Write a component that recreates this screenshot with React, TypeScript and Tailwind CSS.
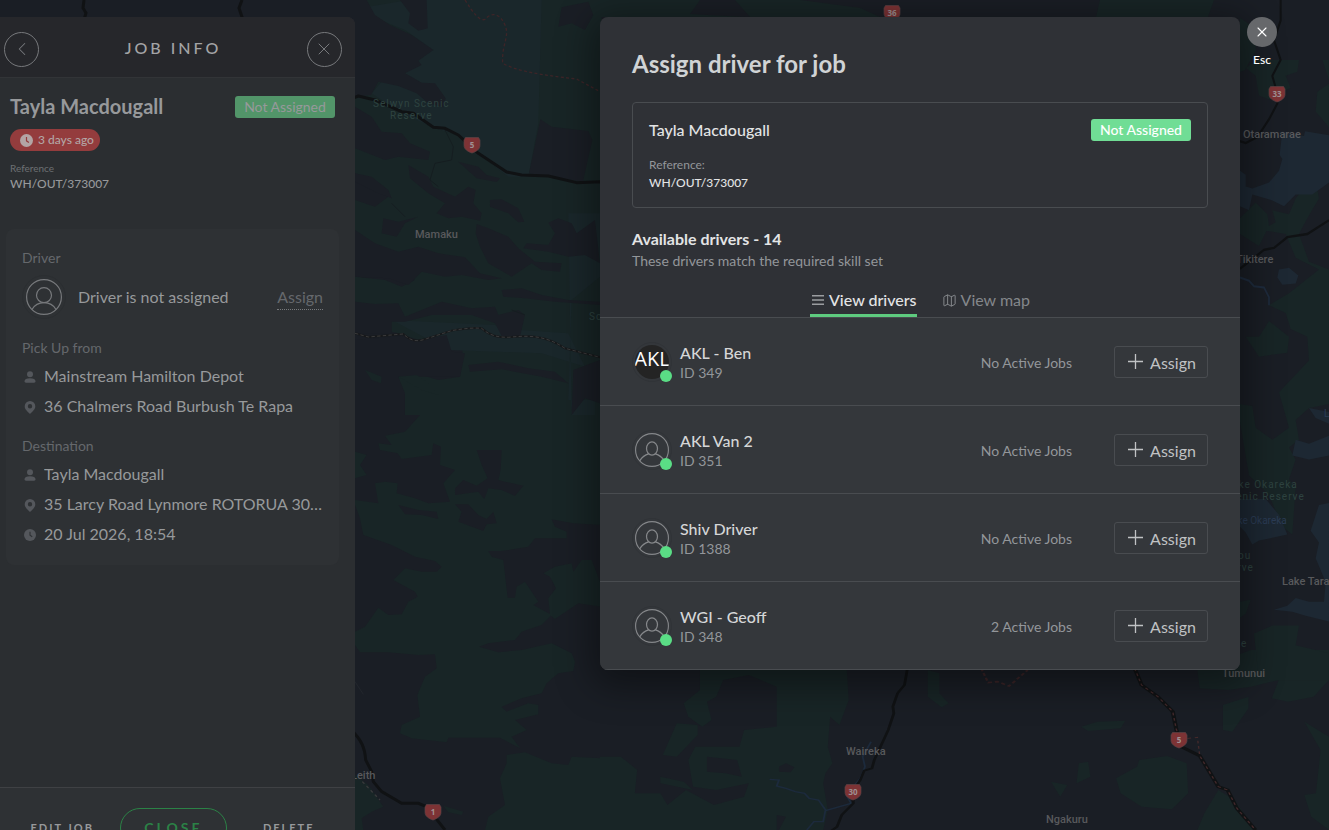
import { useState } from "react";
import { ChevronLeft, Map as MapIcon, X } from "lucide-react";

/* ── Data ───────────────────────────────────────────────────────────── */
interface Driver {
  id: number;
  name: string;
  jobs: string;
  logo?: string;
}

const DRIVERS: Driver[] = [
  { id: 349, name: "AKL - Ben", jobs: "No Active Jobs", logo: "AKL" },
  { id: 351, name: "AKL Van 2", jobs: "No Active Jobs" },
  { id: 1388, name: "Shiv Driver", jobs: "No Active Jobs" },
  { id: 348, name: "WGI - Geoff", jobs: "2 Active Jobs" },
];

const SHIELDS = [
  { x: 892, y: 13, label: "36" },
  { x: 472, y: 145, label: "5" },
  { x: 1277, y: 94, label: "33" },
  { x: 1179, y: 740, label: "5" },
  { x: 853, y: 792, label: "30" },
  { x: 433, y: 812, label: "1" },
];

const TOWNS = [
  { x: 415, y: 238, name: "Mamaku" },
  { x: 1243, y: 138, name: "Otaramarae" },
  { x: 1236, y: 263, name: "Tikitere" },
  { x: 1282, y: 585, name: "Lake Tarawera" },
  { x: 1222, y: 677, name: "Tumunui" },
  { x: 846, y: 755, name: "Waireka" },
  { x: 1046, y: 823, name: "Ngakuru" },
  { x: 351, y: 779, name: "Leith" },
];

/* ── Map ────────────────────────────────────────────────────────────── */
function MapBackdrop() {
  return (
    <svg
      viewBox="0 0 1329 830"
      preserveAspectRatio="xMinYMin slice"
      className="absolute inset-0 h-full w-full bg-[#1a1e25]"
      aria-hidden="true"
    >
      {/* north west forest */}
      <g transform="translate(355 0) scale(.3333)">
        <path
          fill="#182526"
          d="M0 0H740V1245H150L145 1190 128 1130 200 1125 250 1140 315 1130 325 1030 285 1030 270 1000 190 1020 130 1000 60 985 0 1000V830L90 840 140 860 180 840 160 820 0 790V600L60 620 100 590 0 520Z"
        />
        <path
          fill="#1a272b"
          d="M40 20 160 0H560L550 370 520 530H460L370 460 320 410 230 380 140 340 50 280 80 245 200 250 270 290 150 220 195 175 235 150 150 90 50 50ZM110 960 420 975 500 990 640 1000 690 1100 560 1060 280 1050ZM640 640H735V830L650 900 640 1200H720V1245H650Z"
        />
        <path
          fill="#1a1e25"
          d="M0 0H35L60 45 105 75 170 105 235 150 190 182 200 195 150 220 200 248 240 250 272 295 265 322 220 310 185 280 130 258 70 245 48 285 0 290ZM135 0H215L218 85 190 92 160 70 165 40ZM620 22 700 5 715 45 690 90 650 70 610 80ZM556 358 590 380 700 393 712 420 684 545 650 540 580 530 522 520ZM0 320 50 350 80 395 140 400 165 430 225 455 220 480 130 470 90 480 0 445ZM0 520 50 530 100 570 110 595 70 580 0 545ZM160 495 220 530 235 560 300 590 340 560 362 570 355 610 380 640 375 662 320 650 280 655 245 640 270 610 220 580 165 535ZM310 485 370 500 395 525 435 535 425 546 365 535ZM405 600 440 598 490 625 508 665 490 667 460 640 405 620ZM365 672 400 685 460 710 490 745 540 785 620 790 615 815 560 810 530 790 470 830 400 790 375 740 362 700ZM580 668 610 655 650 670 665 700 720 660 735 790 690 765 640 770 580 755 505 745 515 730 580 735 600 700ZM85 655 130 665 190 650 150 670 125 710 80 700ZM0 690 60 730 130 755 190 740 250 760 330 772 375 820 440 835 400 840 320 825 270 830 200 815 160 855 100 835 0 830ZM440 870 500 865 560 885 640 900 735 905V915L600 905 510 895 445 890ZM0 905 60 912 130 910 150 950 200 930 260 905 350 925 420 920 430 945 490 930 510 945 495 1010 440 1008 420 970 350 945 230 945 150 965 110 965V1000L0 1000ZM0 1020 140 1008 185 1020 275 1005 290 1055 330 1060 315 1130 130 1130 150 1180V1245H0ZM340 1095 430 1085 520 1105 600 1115 640 1150 560 1130 440 1108 345 1115ZM655 1110 735 1080V1210L690 1195 650 1245Z"
        />
        <path
          fill="#182526"
          d="M30 1110 80 1130 78 1150 50 1140ZM130 1130 185 1125 220 1150 250 1185 200 1170 165 1150Z"
        />
        <path
          fill="none"
          stroke="#151d20"
          strokeWidth="3"
          d="M270 390 295 440 290 480 240 490 225 540 250 560M110 610 150 650M470 930 510 945"
        />
        <g fill="none">
          <path
            stroke="#3d2528"
            strokeWidth="4"
            strokeDasharray="9 7"
            d="M330 0C355 40 375 65 390 58 410 35 435 40 450 75 465 110 440 130 443 190 490 215 560 225 665 237L735 275"
          />
          <path
            stroke="#17191b"
            strokeWidth="6"
            d="M0 1000 40 1011 145 1002C165 1022 185 1028 215 1016L290 992C330 985 355 983 380 985 405 1008 430 1012 460 1012 520 1006 570 1005 630 1045L735 1072"
          />
          <path
            stroke="#3a3a3b"
            strokeWidth="3"
            strokeDasharray="10 7"
            d="M0 1000 40 1011 145 1002C165 1022 185 1028 215 1016L290 992C330 985 355 983 380 985 405 1008 430 1012 460 1012 520 1006 570 1005 630 1045L735 1072"
          />
          <path
            stroke="#101214"
            strokeWidth="9"
            strokeLinejoin="round"
            d="M-300 250 0 292 10 288 60 300 140 335 175 340 235 382 270 385 310 405 370 460 455 516 500 525 580 528 665 548 735 545 900 570"
          />
        </g>
      </g>

      {/* south west forest */}
      <g transform="translate(355 415) scale(.3333)">
        <path
          fill="#182526"
          d="M195 0H740V330L655 325 590 313 600 335 635 350 635 370 540 370 520 395 440 408 400 408 410 425 445 435 458 548 480 548 485 515 510 500 550 560 535 570 590 600 560 630 500 650 480 675 400 685 372 695 430 712 500 705 590 685 650 715 660 740 655 768 610 775 575 805 560 835 500 850 440 875 455 890 520 865 550 870 550 898 480 915 515 945 470 965 495 1000 435 968H280L275 982 170 970 135 955 140 930 195 905 187 840 210 785 245 760 240 718 190 720 100 712H15L0 690V650L30 635 70 578 100 600 140 598 160 560 188 545 180 530 115 495 150 460 200 470 245 470 260 455 240 438 180 425 110 390 25 360 15 310 0 270V255L70 265 60 205 90 200 128 205 125 235 180 250 220 265 285 260 265 205 300 165 255 150 258 95 235 85 230 120 140 132 90 62 150 50ZM0 110 35 120 15 150 35 180 0 190ZM70 85 110 90 128 115 75 105ZM565 475 600 455 650 445 655 470 680 435 710 435 735 500 740 575 670 565 600 612 585 600 580 550 603 520 585 485ZM455 1020 510 1012 590 1045 640 1050 650 1025 740 1030V1245H390L400 1205 450 1170 435 1090 455 1045ZM0 1080 40 1110 85 1175 50 1190 20 1210 25 1245 0 1245ZM265 1172 325 1190 320 1200 280 1192Z"
        />
        <path
          fill="#1a1e25"
          d="M365 105 440 105 437 165 430 195 450 200 505 212 480 243 440 225 400 220 388 252 370 230 300 240 300 220 325 195 365 212 398 190 380 150ZM300 268 340 268 370 300 395 312 415 290 425 325 395 328 385 348 310 320 320 290ZM130 270 190 285 245 290 250 312 200 300 150 298Z"
        />
        <g fill="none">
          <path
            stroke="#101214"
            strokeWidth="9"
            d="M-12 945C20 975 30 1000 32 1035L50 1070 55 1100 80 1130 140 1165 190 1165 215 1175 270 1245"
          />
          <path stroke="#39393b" strokeWidth="4" strokeDasharray="9 9" d="M22 1100 75 1155" />
          <path stroke="#22262c" strokeWidth="3" d="M0 800 25 838" />
        </g>
      </g>

      {/* strip above the dialog */}
      <path
        fill="#182526"
        d="M600 0H700L690 14 745 17H600ZM735 0H800L860 8 880 17H750ZM1100 0H1214L1208 17H1096ZM1240 18 1252 26 1256 50 1245 70 1240 72Z"
      />

      {/* south */}
      <g transform="translate(600 650) scale(.4649 .3333)">
        <path
          fill="#182526"
          d="M215 40H530L535 150 515 225 495 200 490 290 500 340 485 370 480 400 490 480 480 540H385L400 500 380 495V540H0V320L45 320 80 360 75 430 130 430 145 465 185 420 245 465 310 440 320 400 250 420 200 410 190 330 205 290 300 290 310 240 380 230V110L320 75 265 90 250 140 230 155 240 210 220 230 190 200 180 160 215 120ZM165 220 210 225 210 255 165 320 135 315ZM130 380 180 395 200 420 130 400ZM705 60 730 70 730 130 750 160 735 172 705 140ZM1035 230 1070 215 1130 212 1120 235 1050 243ZM1030 340 1050 335 1055 380 1025 400ZM970 395 1005 405 990 440ZM1110 385 1155 350 1160 330 1220 318 1262 340 1265 430 1230 478 1165 470 1120 430ZM1330 420 1365 450 1410 540H1285L1300 490ZM1400 0H1568V90L1535 140 1480 155 1445 145 1460 90 1400 110 1350 120 1290 115 1285 60ZM1340 165 1395 140 1395 175 1360 245 1340 240ZM1515 215 1568 260V540L1530 500 1515 435 1540 430 1550 300Z"
        />
        <path fill="#1a1e25" d="M230 320 295 330 305 380 270 370 230 365ZM385 350 400 340 418 352 410 367 385 365Z" />
        <g fill="none">
          <path
            stroke="#1c2a3c"
            strokeWidth="4"
            d="M365 388 385 390 380 408 400 415 420 425 440 430 450 445 470 450 485 480 480 515 460 515 445 540M485 482 540 460 530 435 560 385 570 350 565 320 583 275"
          />
          <path
            stroke="#101214"
            strokeWidth="6"
            d="M662 50 655 105 640 130 630 170 632 190 620 240 590 330 585 355 568 362 560 390 543 425 545 460 520 495 510 530 495 545"
          />
          <path stroke="#3a2427" strokeWidth="5" strokeDasharray="9 6" d="M820 55 835 98 855 95 880 108 920 60" />
          <path
            stroke="#101214"
            strokeWidth="9"
            d="M1150 55 1165 105 1200 140 1232 185 1240 240 1250 290 1290 317 1330 410 1350 420 1370 475 1410 540"
          />
          <path
            stroke="#43292b"
            strokeWidth="3"
            strokeDasharray="8 8"
            d="M1150 55 1165 105 1200 140 1232 185 1240 240 1250 268 1285 262 1290 317 1330 410 1350 420 1370 475 1410 540"
          />
        </g>
      </g>

      {/* east: lakes and bush beside the dialog */}
      <g transform="translate(1229 60) scale(.3333 .3955)">
        <path
          fill="#182526"
          d="M80 0 210 0 205 30 170 40 185 70 120 100 90 90 80 40 50 20ZM300 245 260 300 270 350 235 400 210 440 240 510 300 530V870L240 880 200 910 210 960 180 980 200 1010 180 1060 200 1080 190 1200 160 1180 120 1100 60 1050 30 900V870L70 875 80 930 130 960 180 930 150 840 240 760 235 700 185 680 170 640 120 620 180 590 270 530 200 500 170 440 100 430 140 410 130 380 180 390 200 350ZM33 400 80 360 115 390 120 420 90 470 33 440ZM50 700 90 700 120 660 180 700 175 740 90 750ZM33 1370 65 1365 50 1400 33 1410ZM75 1450 130 1430 210 1430 200 1480 300 1500V1568H90ZM260 130 265 80 300 60V170ZM280 0 300 0V50Z"
        />
        <path
          fill="#1d2833"
          d="M160 180 185 188 225 192 228 180 300 190V310L250 340 200 340 165 370 130 355 70 340 60 380 33 370V280L50 290 50 320 70 325 120 310 150 280 160 250 152 240ZM150 530 180 525 208 545 200 565 160 568 145 550ZM190 1000 200 960 240 970 300 950V1000L240 1010ZM240 880 300 890V920L260 905ZM33 1180V1110L110 1110 150 1150 175 1200 120 1210 90 1215 70 1225 50 1195ZM270 1125 300 1120V1420L230 1405 190 1395 135 1390 175 1380 200 1360 240 1370 285 1370 290 1320 260 1260 270 1220 245 1190Z"
        />
        <g fill="none">
          <path stroke="#1e2b3d" strokeWidth="5" d="M33 550 60 558 75 572 105 575 120 600 120 620" />
          <path stroke="#101214" strokeWidth="6" d="M155-160 155-100 135-50 155 0 130 40 140 70 145 110 120 150 85 195 50 210 33 205" />
          <path stroke="#101214" strokeWidth="6" d="M33 528 105 480 135 475 175 448 235 440 300 405" />
        </g>
      </g>

      {/* roads over the side panel */}
      <path fill="none" stroke="#101214" strokeWidth="3" d="M84 0 83 8 86 13 84 20M242 0 239 8 243 20" />

      <g fontFamily="Roboto, 'Noto Sans', sans-serif" fontSize="10" letterSpacing="1" fill="#2e4340">
        <text x="373" y="107">Selwyn Scenic</text>
        <text x="390" y="119">Reserve</text>
        <text x="589" y="320">Sc</text>
        <text x="1232" y="488">ake Okareka</text>
        <text x="1230" y="500">cenic Reserve</text>
        <text x="1238" y="559">ou</text>
        <text x="1231" y="571">erve</text>
        <text x="1241" y="647">e</text>
      </g>
      <g fontFamily="Roboto, 'Noto Sans', sans-serif" fontSize="10" fill="#2b3c55">
        <text x="1232" y="524">ake Okareka</text>
        <text x="1324" y="417">L</text>
      </g>
      <g fontFamily="Roboto, 'Noto Sans', sans-serif" fontSize="11" fontWeight="500" fill="#58595c">
        {TOWNS.map((t) => (
          <text key={t.name} x={t.x} y={t.y}>
            {t.name}
          </text>
        ))}
      </g>

      {SHIELDS.map((s) => (
        <g key={`${s.label}-${s.x}`} transform={`translate(${s.x} ${s.y})`}>
          <path
            d="M-6.500-7.500H6.500L8-5V0.500C8 4 4.500 6.500 0 8-4.500 6.500-8 4-8 0.500V-5Z"
            fill="#7d3335"
            stroke="#5b4245"
            strokeWidth="0.7"
          />
          <text y="3" textAnchor="middle" fontFamily="'Noto Sans', sans-serif" fontSize="8" fontWeight="700" fill="#a09193">
            {s.label}
          </text>
        </g>
      ))}
    </svg>
  );
}

/* ── Icons ──────────────────────────────────────────────────────────── */
function PersonOutline({ className }: { className: string }) {
  return (
    <svg viewBox="0 0 36 36" fill="none" stroke="currentColor" className={className} aria-hidden="true">
      <circle cx="18" cy="18" r="17.4" strokeWidth="1.2" />
      <ellipse cx="18" cy="16.5" rx="5.8" ry="7" strokeWidth="1.3" />
      <path d="M5 29.5C7.5 25.5 10.500 23.300 14.500 22.200M21.500 22.200C25.500 23.300 28.500 25.500 31 29.500" strokeWidth="1.3" />
    </svg>
  );
}

function DriverOutline({ className }: { className: string }) {
  return (
    <svg viewBox="0 0 36 36" fill="none" stroke="currentColor" className={className} aria-hidden="true">
      <circle cx="18" cy="18" r="17.4" strokeWidth="1.2" />
      <circle cx="18" cy="16.2" r="7.5" strokeWidth="1.2" />
      <path d="M6 30.5C8.5 26.2 13 23.7 18 23.7S27.5 26.2 30 30.5" strokeWidth="1.2" />
    </svg>
  );
}

function PersonIcon() {
  return (
    <svg viewBox="0 0 12 12" fill="currentColor" className="size-3" aria-hidden="true">
      <circle cx="6" cy="3.2" r="3" />
      <path d="M0.5 10.3C0.5 8.2 2.5 7.3 6 7.3S11.5 8.2 11.5 10.3C11.5 11.4 11 11.7 10 11.7H2C1 11.7 0.5 11.4 0.5 10.3Z" />
    </svg>
  );
}

function PinIcon() {
  return (
    <svg viewBox="0 0 12 13" fill="currentColor" className="h-[13px] w-3" aria-hidden="true">
      <path
        fillRule="evenodd"
        d="M6 0A5.3 5.3 0 0 1 11.3 5.3C11.3 8.5 8.5 10.5 6 13 3.5 10.5 0.7 8.5 0.7 5.3A5.3 5.3 0 0 1 6 0ZM6 3A2.2 2.2 0 1 0 6 7.4 2.2 2.2 0 0 0 6 3Z"
      />
    </svg>
  );
}

function ClockIcon({ className, hand }: { className: string; hand: string }) {
  return (
    <svg viewBox="0 0 12 12" className={className} aria-hidden="true">
      <circle cx="6" cy="6" r="6" fill="currentColor" />
      <path d="M6 2.8V6.3L8.2 7.8" fill="none" stroke={hand} strokeWidth="1.1" />
    </svg>
  );
}

function ListIcon() {
  return (
    <svg viewBox="0 0 12 12" className="size-3 text-[#9b9da0]" fill="currentColor" aria-hidden="true">
      <path d="M0 1H12V2.5H0ZM0 5.3H12V6.8H0ZM0 9.6H12V11.1H0Z" />
    </svg>
  );
}

function PlusIcon() {
  return (
    <svg viewBox="0 0 15 15" className="size-[15px]" fill="none" stroke="currentColor" aria-hidden="true">
      <path d="M7.5 0V15M0 7.5H15" strokeWidth="1.3" />
    </svg>
  );
}

/* ── Side panel ─────────────────────────────────────────────────────── */
function InfoRow({ icon, text }: { icon: React.ReactNode; text: string }) {
  return (
    <li className="flex h-[30px] items-center gap-[7px]">
      <span className="flex w-[15px] shrink-0 justify-center pt-0.5 text-[#54575c]">{icon}</span>
      <span className="truncate text-base text-[#97999b]">{text}</span>
    </li>
  );
}

function JobPanel() {
  return (
    <aside className="relative mt-[17px] flex h-screen w-[355px] shrink-0 flex-col overflow-hidden rounded-tr-lg bg-[#2b2e31] text-[#97999b]">
      <header className="flex h-[61px] shrink-0 items-center justify-between border-b border-[#323437] bg-[#26272b] pt-1 pr-[13px] pl-1">
        <button aria-label="Back" className="flex size-[35px] items-center justify-center rounded-full border border-[#77797c] text-[#77797c]">
          <ChevronLeft size={22} strokeWidth={1.1} />
        </button>
        <h1 className="pb-0.5 text-base font-medium tracking-[3px] text-[#a3a4a6]">JOB INFO</h1>
        <button aria-label="Close panel" className="flex size-[35px] items-center justify-center rounded-full border border-[#77797c] text-[#77797c]">
          <X size={20} strokeWidth={1.2} />
        </button>
      </header>

      <section className="pt-4 pr-5 pl-[10px]">
        <div className="flex items-center justify-between">
          <h2 className="pb-0.5 text-[20px] leading-6 font-bold">Tayla Macdougall</h2>
          <span className="flex h-[22px] w-[100px] items-center justify-center rounded-[3px] bg-[#529569] pb-px text-sm">
            Not Assigned
          </span>
        </div>
        <span className="mt-[9px] flex h-[22px] w-[90px] items-center gap-[5px] rounded-full bg-[#943c3d] pl-[10px] text-xs font-medium text-[#b3a5a5]">
          <ClockIcon className="size-[13px]" hand="#943c3d" />3 days ago
        </span>
        <p className="mt-[10px] text-[10px] leading-[14px] text-[#6d7073]">Reference</p>
        <p className="text-xs leading-[18px] font-medium">WH/OUT/373007</p>
      </section>

      <section className="mt-9 mr-4 ml-1.5 rounded-lg bg-[#2e3134] px-4 pt-5 pb-4 text-[#97999b]">
        <h3 className="text-sm leading-[18px] text-[#65686c]">Driver</h3>
        <div className="mt-2 flex items-center">
          <span className="flex size-11 items-center justify-center rounded-full border border-[#2b2e31] text-[#77797c]">
            <DriverOutline className="size-9" />
          </span>
          <span className="ml-3 flex-1">Driver is not assigned</span>
          <button className="border-b border-dotted border-[#77797c] leading-6 text-[#65686c]">Assign</button>
        </div>
        <h3 className="mt-5 text-sm leading-[18px] text-[#65686c]">Pick Up from</h3>
        <ul className="mt-1">
          <InfoRow icon={<PersonIcon />} text="Mainstream Hamilton Depot" />
          <InfoRow icon={<PinIcon />} text="36 Chalmers Road Burbush Te Rapa" />
        </ul>
        <h3 className="mt-4 text-sm leading-[18px] text-[#65686c]">Destination</h3>
        <ul className="mt-1">
          <InfoRow icon={<PersonIcon />} text="Tayla Macdougall" />
          <InfoRow icon={<PinIcon />} text="35 Larcy Road Lynmore ROTORUA 3010, New Zealand" />
          <InfoRow icon={<ClockIcon className="size-3" hand="#2e3134" />} text="20 Jul 2026, 18:54" />
        </ul>
      </section>

      <footer className="mt-auto flex h-[60px] shrink-0 items-start justify-center gap-[26px] border-t border-[#3f4144] bg-[#2e3134] pt-5 pr-[10px] font-bold">
        <button className="h-10 text-[11px] tracking-[2px]">EDIT JOB</button>
        <button className="h-10 w-[107px] rounded-full border border-[#2b8246] text-sm tracking-[3px] text-[#2b8246]">
          CLOSE
        </button>
        <button className="ml-[10px] h-10 text-[11px] tracking-[2px]">DELETE</button>
      </footer>
    </aside>
  );
}

/* ── Dialog ─────────────────────────────────────────────────────────── */
function DriverRow({ driver }: { driver: Driver }) {
  return (
    <li className="flex h-[88px] items-center border-b border-[#494c50] px-8">
      <span className="relative flex size-10 shrink-0 items-center justify-center rounded-full border border-[#303337]">
        {driver.logo ? (
          <span className="flex size-[34px] items-start justify-center overflow-hidden rounded-full bg-[#242424] pt-0.5 font-['Open_Sans'] text-[20px] leading-6 text-white">
            {driver.logo}
          </span>
        ) : (
          <PersonOutline className="size-[34px] text-[#85878a]" />
        )}
        <span className="absolute -right-px -bottom-px size-3 rounded-full bg-[#5add85]" />
      </span>
      <div className="ml-2 flex-1 pt-0.5">
        <p className="text-base leading-5 font-medium text-[#d5d6d7]">{driver.name}</p>
        <p className="text-sm leading-5 text-[#93969a]">ID {driver.id}</p>
      </div>
      <span className="pt-0.5 text-sm text-[#93969a]">{driver.jobs}</span>
      <button className="ml-[42px] flex h-8 w-[94px] items-center justify-center gap-[7px] rounded-[3px] border border-[#494c50] pl-0.5 text-base text-[#c0c2c4]">
        <PlusIcon />
        <span className="pt-0.5">Assign</span>
      </button>
    </li>
  );
}

function AssignDialog() {
  const [tab, setTab] = useState<"drivers" | "map">("drivers");

  return (
    <div
      role="dialog"
      aria-labelledby="assign-title"
      className="w-full max-w-[640px] overflow-hidden rounded-lg bg-[#2f3136] shadow-[0_8px_36px_8px_rgba(0,0,0,0.4)]"
    >
      <div className="px-8 pt-[31px]">
        <h2 id="assign-title" className="text-2xl leading-8 font-bold text-[#d0d3d5]">
          Assign driver for job
        </h2>
        <div className="mt-[22px] rounded border border-[#494c50] px-4 pt-4 pb-[15px]">
          <div className="flex items-center justify-between">
            <span className="text-base leading-[22px] font-medium text-[#e3e4e5]">Tayla Macdougall</span>
            <span className="flex h-[22px] w-[100px] items-center justify-center rounded-[3px] bg-[#70dd95] text-sm font-medium text-white">
              Not Assigned
            </span>
          </div>
          <p className="mt-[15px] text-xs leading-[18px] text-[#93969a]">Reference:</p>
          <p className="text-xs leading-[18px] font-medium text-[#e3e4e5]">WH/OUT/373007</p>
        </div>
        <h3 className="mt-5 text-base leading-[22px] font-bold text-[#e3e4e5]">Available drivers - 14</h3>
        <p className="text-sm leading-[22px] text-[#93969a]">These drivers match the required skill set</p>
      </div>

      <div role="tablist" className="mt-[14px] flex justify-center gap-[25px] border-b border-[#494c50]">
        <button
          role="tab"
          aria-selected={tab === "drivers"}
          onClick={() => setTab("drivers")}
          className={`flex h-[31px] items-center gap-[5px] border-b-[3px] pl-0.5 text-base ${
            tab === "drivers" ? "border-[#5ecb7f] font-medium text-[#e3e4e5]" : "border-transparent text-[#84878b]"
          }`}
        >
          <ListIcon />
          View drivers
        </button>
        <button
          role="tab"
          aria-selected={tab === "map"}
          onClick={() => setTab("map")}
          className={`flex h-[31px] items-center gap-1 border-b-[3px] text-base ${
            tab === "map" ? "border-[#5ecb7f] font-medium text-[#e3e4e5]" : "border-transparent text-[#84878b]"
          }`}
        >
          <MapIcon size={15} strokeWidth={1.6} />
          View map
        </button>
      </div>

      <ul className="bg-[#34373b]">
        {DRIVERS.map((d) => (
          <DriverRow key={d.id} driver={d} />
        ))}
      </ul>
    </div>
  );
}

/* ── Page ───────────────────────────────────────────────────────────── */
export default function App() {
  return (
    <div className="relative h-screen overflow-hidden bg-[#1a1e25] font-['Lato',sans-serif]">
      <MapBackdrop />
      <div className="relative flex items-start">
        <JobPanel />
        <main className="flex min-w-0 flex-1 items-start justify-end gap-[7px] pt-[17px] pr-[52px]">
          <AssignDialog />
          <div className="flex w-[30px] flex-col items-center">
            <button
              aria-label="Close dialog"
              className="flex size-[30px] items-center justify-center rounded-full bg-[#66686b] text-white"
            >
              <X size={16} strokeWidth={1.6} />
            </button>
            <span className="mt-1 text-xs leading-[18px] font-medium text-white">Esc</span>
          </div>
        </main>
      </div>
    </div>
  );
}
